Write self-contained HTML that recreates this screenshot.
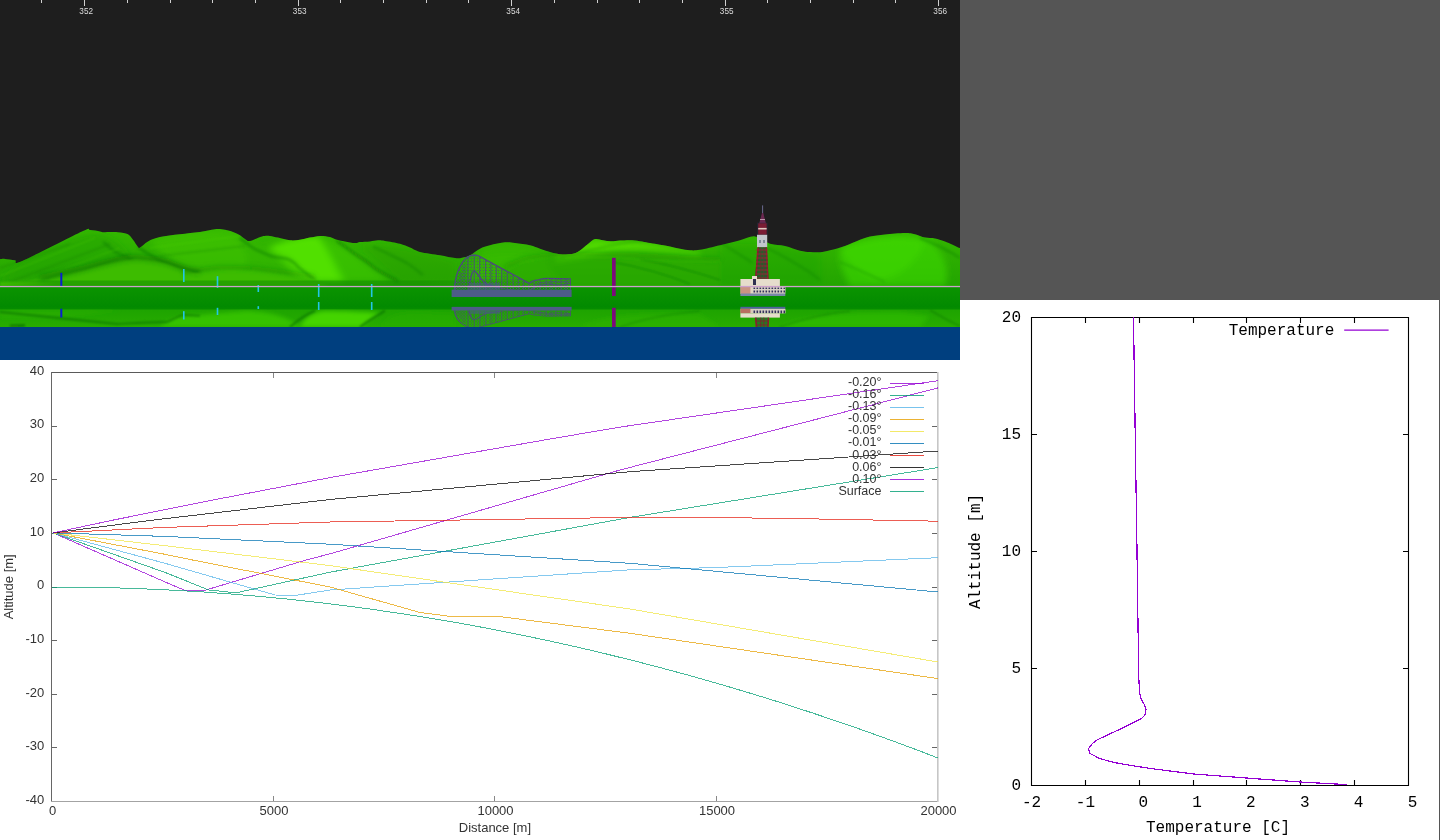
<!DOCTYPE html>
<html><head><meta charset="utf-8"><style>
html,body{margin:0;padding:0;background:#555555;width:1440px;height:840px;overflow:hidden}
svg{display:block}
text{font-family:"Liberation Sans",sans-serif} text.m{font-family:"Liberation Mono",monospace}
</style></head><body>
<svg width="1440" height="840" viewBox="0 0 1440 840">
<rect x="0" y="0" width="1440" height="840" fill="#555555"/>
<defs>
<linearGradient id="gTer" x1="0" y1="0" x2="0" y2="1"><stop offset="0" stop-color="#34b800"/><stop offset="0.5" stop-color="#2cae00"/><stop offset="1" stop-color="#22a400"/></linearGradient>
<linearGradient id="gBand" gradientUnits="userSpaceOnUse" x1="0" y1="286.5" x2="0" y2="327"><stop offset="0" stop-color="#0a9400"/><stop offset="0.2" stop-color="#089000"/><stop offset="0.5" stop-color="#028a00"/><stop offset="0.545" stop-color="#068c00"/><stop offset="0.59" stop-color="#1ea400"/><stop offset="1" stop-color="#28ac00"/></linearGradient>
<filter id="blur3" x="-20%" y="-50%" width="140%" height="200%"><feGaussianBlur stdDeviation="3"/></filter>
<filter id="blur1" x="-20%" y="-50%" width="140%" height="200%"><feGaussianBlur stdDeviation="1"/></filter>
<filter id="blur15" x="-20%" y="-50%" width="140%" height="200%"><feGaussianBlur stdDeviation="1.5"/></filter>
<filter id="blur2" x="-20%" y="-50%" width="140%" height="200%"><feGaussianBlur stdDeviation="2"/></filter>
<pattern id="patDots" x="0" y="0" width="3" height="3" patternUnits="userSpaceOnUse"><rect x="0" y="0" width="1" height="1" fill="#4c4c7a"/><rect x="1.5" y="1.5" width="1" height="1" fill="#4c4c7a" opacity="0.6"/></pattern>
<linearGradient id="gStrip" x1="0" y1="0" x2="1" y2="0"><stop offset="0" stop-color="#148c00" stop-opacity="0"/><stop offset="0.1" stop-color="#148c00" stop-opacity="1"/><stop offset="0.75" stop-color="#148c00"/><stop offset="1" stop-color="#148c00" stop-opacity="0"/></linearGradient>
<pattern id="patWin" x="0" y="0" width="3" height="5" patternUnits="userSpaceOnUse"><rect width="3" height="5" fill="#d8d0c4"/><rect x="0.5" y="0.5" width="1.6" height="3.5" fill="#34345e"/></pattern>
</defs>
<rect x="0" y="0" width="960" height="360" fill="#1e1e1e"/><clipPath id="cpSil"><path d="M0.0,259.2C0.8,259.1 2.5,258.7 5.0,258.9C7.5,259.1 12.1,259.9 15.0,260.3C17.9,260.7 11.0,265.8 22.2,261.0C33.4,256.2 70.7,236.7 82.0,231.5C93.3,226.3 87.0,230.0 90.0,230.0C93.0,230.0 97.7,231.0 100.0,231.4C102.3,231.8 101.0,232.1 104.0,232.2C107.0,232.3 114.0,231.9 118.0,232.2C122.0,232.5 125.5,232.9 128.0,234.2C130.5,235.5 131.3,237.7 133.0,239.8C134.7,241.9 136.8,245.7 138.0,247.0C139.2,248.3 138.3,248.5 140.0,247.6C141.7,246.7 144.7,243.2 148.0,241.4C151.3,239.6 154.7,238.2 160.0,237.0C165.3,235.8 173.3,235.0 180.0,234.2C186.7,233.4 194.2,232.8 200.0,232.0C205.8,231.2 210.8,229.6 215.0,229.2C219.2,228.8 222.0,229.3 225.0,229.8C228.0,230.3 230.5,231.1 233.0,232.0C235.5,232.9 237.8,234.0 240.0,235.3C242.2,236.6 244.3,238.9 246.0,239.8C247.7,240.7 247.3,241.5 250.0,240.9C252.7,240.3 258.7,237.2 262.0,236.4C265.3,235.6 267.3,235.7 270.0,235.9C272.7,236.1 274.7,236.9 278.0,237.6C281.3,238.3 286.3,239.9 290.0,240.3C293.7,240.7 296.7,240.2 300.0,239.8C303.3,239.4 306.7,238.2 310.0,237.6C313.3,236.9 316.7,236.0 320.0,235.9C323.3,235.8 327.2,236.3 330.0,237.0C332.8,237.7 334.5,239.1 337.0,239.8C339.5,240.5 342.0,240.9 345.0,241.4C348.0,241.9 352.5,243.0 355.0,243.1C357.5,243.2 357.5,242.3 360.0,242.0C362.5,241.7 367.0,241.7 370.0,241.4C373.0,241.1 375.5,240.4 378.0,240.3C380.5,240.2 381.3,240.3 385.0,240.9C388.7,241.5 395.8,242.6 400.0,243.7C404.2,244.8 406.7,246.2 410.0,247.6C413.3,249.0 415.0,250.7 420.0,252.0C425.0,253.3 434.2,254.3 440.0,255.3C445.8,256.3 451.3,257.7 455.0,258.1C458.7,258.5 459.5,258.3 462.0,257.8C464.5,257.3 467.0,256.8 470.0,255.3C473.0,253.8 476.7,250.4 480.0,248.7C483.3,247.0 485.8,246.4 490.0,245.3C494.2,244.2 500.8,242.7 505.0,242.3C509.2,241.9 510.8,242.6 515.0,243.1C519.2,243.6 525.8,244.4 530.0,245.3C534.2,246.2 536.7,247.6 540.0,248.7C543.3,249.8 546.7,251.1 550.0,252.0C553.3,252.9 556.3,253.9 560.0,254.2C563.7,254.5 568.7,254.6 572.0,254.0C575.3,253.4 577.3,252.2 580.0,250.5C582.7,248.8 585.5,245.9 588.0,244.0C590.5,242.1 592.5,239.7 595.0,239.1C597.5,238.5 600.3,239.8 603.0,240.2C605.7,240.6 608.2,241.2 611.0,241.3C613.8,241.4 616.5,240.7 620.0,240.5C623.5,240.3 628.3,240.0 632.0,240.2C635.7,240.4 639.0,241.0 642.0,241.5C645.0,242.0 647.0,242.5 650.0,243.1C653.0,243.7 656.7,244.2 660.0,244.8C663.3,245.4 666.7,245.8 670.0,246.4C673.3,247.1 676.7,248.0 680.0,248.7C683.3,249.3 686.7,250.1 690.0,250.3C693.3,250.5 695.0,250.6 700.0,249.8C705.0,249.0 713.3,246.9 720.0,245.3C726.7,243.7 734.2,241.8 740.0,240.3C745.8,238.8 750.0,235.8 755.0,236.4C760.0,237.0 765.0,242.1 770.0,243.7C775.0,245.3 780.0,244.7 785.0,245.9C790.0,247.1 795.8,249.7 800.0,250.7C804.2,251.7 806.7,251.8 810.0,252.0C813.3,252.2 816.7,252.5 820.0,252.2C823.3,251.9 825.8,251.4 830.0,250.3C834.2,249.2 840.0,247.7 845.0,245.9C850.0,244.2 855.8,241.4 860.0,239.8C864.2,238.2 865.8,237.3 870.0,236.4C874.2,235.5 879.2,235.0 885.0,234.4C890.8,233.8 900.0,232.9 905.0,232.9C910.0,232.9 911.7,233.4 915.0,234.2C918.3,235.0 921.7,236.9 925.0,237.6C928.3,238.3 931.7,237.8 935.0,238.4C938.3,239.0 940.8,239.8 945.0,241.4C949.2,243.0 957.5,247.0 960.0,248.1L960,287.5L0,287.5Z"/></clipPath><clipPath id="cpBand"><rect x="0" y="286.5" width="960" height="40.5"/></clipPath><clipPath id="cpRefl"><rect x="0" y="309" width="960" height="18"/></clipPath><path d="M0.0,259.2C0.8,259.1 2.5,258.7 5.0,258.9C7.5,259.1 12.1,259.9 15.0,260.3C17.9,260.7 11.0,265.8 22.2,261.0C33.4,256.2 70.7,236.7 82.0,231.5C93.3,226.3 87.0,230.0 90.0,230.0C93.0,230.0 97.7,231.0 100.0,231.4C102.3,231.8 101.0,232.1 104.0,232.2C107.0,232.3 114.0,231.9 118.0,232.2C122.0,232.5 125.5,232.9 128.0,234.2C130.5,235.5 131.3,237.7 133.0,239.8C134.7,241.9 136.8,245.7 138.0,247.0C139.2,248.3 138.3,248.5 140.0,247.6C141.7,246.7 144.7,243.2 148.0,241.4C151.3,239.6 154.7,238.2 160.0,237.0C165.3,235.8 173.3,235.0 180.0,234.2C186.7,233.4 194.2,232.8 200.0,232.0C205.8,231.2 210.8,229.6 215.0,229.2C219.2,228.8 222.0,229.3 225.0,229.8C228.0,230.3 230.5,231.1 233.0,232.0C235.5,232.9 237.8,234.0 240.0,235.3C242.2,236.6 244.3,238.9 246.0,239.8C247.7,240.7 247.3,241.5 250.0,240.9C252.7,240.3 258.7,237.2 262.0,236.4C265.3,235.6 267.3,235.7 270.0,235.9C272.7,236.1 274.7,236.9 278.0,237.6C281.3,238.3 286.3,239.9 290.0,240.3C293.7,240.7 296.7,240.2 300.0,239.8C303.3,239.4 306.7,238.2 310.0,237.6C313.3,236.9 316.7,236.0 320.0,235.9C323.3,235.8 327.2,236.3 330.0,237.0C332.8,237.7 334.5,239.1 337.0,239.8C339.5,240.5 342.0,240.9 345.0,241.4C348.0,241.9 352.5,243.0 355.0,243.1C357.5,243.2 357.5,242.3 360.0,242.0C362.5,241.7 367.0,241.7 370.0,241.4C373.0,241.1 375.5,240.4 378.0,240.3C380.5,240.2 381.3,240.3 385.0,240.9C388.7,241.5 395.8,242.6 400.0,243.7C404.2,244.8 406.7,246.2 410.0,247.6C413.3,249.0 415.0,250.7 420.0,252.0C425.0,253.3 434.2,254.3 440.0,255.3C445.8,256.3 451.3,257.7 455.0,258.1C458.7,258.5 459.5,258.3 462.0,257.8C464.5,257.3 467.0,256.8 470.0,255.3C473.0,253.8 476.7,250.4 480.0,248.7C483.3,247.0 485.8,246.4 490.0,245.3C494.2,244.2 500.8,242.7 505.0,242.3C509.2,241.9 510.8,242.6 515.0,243.1C519.2,243.6 525.8,244.4 530.0,245.3C534.2,246.2 536.7,247.6 540.0,248.7C543.3,249.8 546.7,251.1 550.0,252.0C553.3,252.9 556.3,253.9 560.0,254.2C563.7,254.5 568.7,254.6 572.0,254.0C575.3,253.4 577.3,252.2 580.0,250.5C582.7,248.8 585.5,245.9 588.0,244.0C590.5,242.1 592.5,239.7 595.0,239.1C597.5,238.5 600.3,239.8 603.0,240.2C605.7,240.6 608.2,241.2 611.0,241.3C613.8,241.4 616.5,240.7 620.0,240.5C623.5,240.3 628.3,240.0 632.0,240.2C635.7,240.4 639.0,241.0 642.0,241.5C645.0,242.0 647.0,242.5 650.0,243.1C653.0,243.7 656.7,244.2 660.0,244.8C663.3,245.4 666.7,245.8 670.0,246.4C673.3,247.1 676.7,248.0 680.0,248.7C683.3,249.3 686.7,250.1 690.0,250.3C693.3,250.5 695.0,250.6 700.0,249.8C705.0,249.0 713.3,246.9 720.0,245.3C726.7,243.7 734.2,241.8 740.0,240.3C745.8,238.8 750.0,235.8 755.0,236.4C760.0,237.0 765.0,242.1 770.0,243.7C775.0,245.3 780.0,244.7 785.0,245.9C790.0,247.1 795.8,249.7 800.0,250.7C804.2,251.7 806.7,251.8 810.0,252.0C813.3,252.2 816.7,252.5 820.0,252.2C823.3,251.9 825.8,251.4 830.0,250.3C834.2,249.2 840.0,247.7 845.0,245.9C850.0,244.2 855.8,241.4 860.0,239.8C864.2,238.2 865.8,237.3 870.0,236.4C874.2,235.5 879.2,235.0 885.0,234.4C890.8,233.8 900.0,232.9 905.0,232.9C910.0,232.9 911.7,233.4 915.0,234.2C918.3,235.0 921.7,236.9 925.0,237.6C928.3,238.3 931.7,237.8 935.0,238.4C938.3,239.0 940.8,239.8 945.0,241.4C949.2,243.0 957.5,247.0 960.0,248.1L960,287.5L0,287.5Z" fill="url(#gTer)"/><g clip-path="url(#cpSil)"><g filter="url(#blur3)"><path d="M20,262 C50,246 80,232 100,234 C115,238 125,248 133,262 L60,282 L0,282Z" fill="#26a200" opacity="0.5"/><path d="M150,240 C180,232 210,228 235,234 C245,246 250,258 245,270 L190,272 C170,262 158,252 150,240Z" fill="#40c400" opacity="0.6"/><path d="M268,248 C285,240 305,235 318,236 C326,246 336,262 346,282 L300,282 C290,270 280,258 268,248Z" fill="#54e600" opacity="0.9"/><path d="M318,236 C335,240 352,252 370,266 L392,282 L340,282 C332,262 324,246 318,236Z" fill="#40cc00" opacity="0.6"/><path d="M246,240 C260,246 275,250 290,258 C300,268 308,276 312,282 L246,282Z" fill="#38bc00" opacity="0.5"/><path d="M360,246 C390,244 420,250 455,262 L455,282 L400,282Z" fill="#249c00" opacity="0.35"/><path d="M470,262 C490,254 520,254 545,260 L560,282 L470,282Z" fill="#3cc400" opacity="0.5"/><path d="M555,257 C570,250 585,242 595,239 C603,240 611,241 620,240.5 C632,240 645,242 700,252 L700,256 C660,250 630,250 612,252 C595,254 575,258 555,262Z" fill="#58e400" opacity="0.8"/><path d="M480,250 C500,240 520,242 550,252 L550,262 L480,262Z" fill="#3cc000" opacity="0.45"/><path d="M840,246 C870,236 905,232 925,240 C920,258 905,275 880,280 C860,275 845,262 840,246Z" fill="#44dc00" opacity="0.5"/><path d="M500,272 C520,262 540,258 560,258 C600,256 650,258 720,262 L720,286 L500,286Z" fill="#2eac00" opacity="0.45"/><path d="M720,246 C760,240 790,248 820,254 L820,286 L720,286Z" fill="#22a000" opacity="0.35"/><path d="M840,250 C860,238 900,232 930,240 C945,255 950,270 945,286 L850,286 C842,272 838,260 840,250Z" fill="#3ed800" opacity="0.6"/></g><g filter="url(#blur15)"><path d="M138,246.7 C142,250 144,251 147,253 C155,258 160,261 167,263 C180,268 190,270 200,273" fill="none" stroke="#0c6e00" stroke-width="2.5" opacity="0.5"/><path d="M103,241.7 C108,246 112,250 117,253 C124,256 128,258 133,260" fill="none" stroke="#0c6e00" stroke-width="2.2" opacity="0.45"/><path d="M240,238 C248,244 252,248 256.7,250 C264,253 268,255 273,256.7 C280,258 286,258 290,260 C294,262 296,264 298,266.7 C304,272 310,276 315,280" fill="none" stroke="#0c6e00" stroke-width="2.2" opacity="0.5"/><path d="M336.7,240.8 C346,247 351,251 356.7,255 C363,259 368,262 373,266.7 C380,272 385,274 390,276.7 C394,279 396,280 398,281.7" fill="none" stroke="#0c6e00" stroke-width="2.5" opacity="0.55"/><path d="M373,246.7 C385,252 397,258 407,263 C413,267 418,271 423,275" fill="none" stroke="#0c6e00" stroke-width="2" opacity="0.4"/><path d="M560,258 C590,250 620,242 650,240" fill="none" stroke="#0c6e00" stroke-width="1.5" opacity="0.35"/><path d="M720,241.7 C732,250 742,256 753,263" fill="none" stroke="#0c6e00" stroke-width="1.8" opacity="0.35"/><path d="M767,248 C780,254 790,260 803,268 C810,272 815,276 820,280" fill="none" stroke="#0c6e00" stroke-width="1.8" opacity="0.35"/><path d="M920,238 C935,244 948,250 960,258" fill="none" stroke="#0c6e00" stroke-width="2" opacity="0.4"/><path d="M840,262 C855,268 870,275 885,282" fill="none" stroke="#0c6e00" stroke-width="1.5" opacity="0.3"/></g><g filter="url(#blur1)" opacity="0.35"><path d="M0,276 L95,238" stroke="#48c800" stroke-width="1.5"/><path d="M10,282 L110,244" stroke="#187e00" stroke-width="1.5"/><path d="M30,282 L120,248" stroke="#48c800" stroke-width="1.5"/><path d="M0,268 L70,244" stroke="#187e00" stroke-width="1.5"/><path d="M50,282 L130,254" stroke="#187e00" stroke-width="1.5"/><path d="M70,282 L140,258" stroke="#48c800" stroke-width="1.5"/><path d="M150,248 L240,236" stroke="#50d000" stroke-width="1.5"/><path d="M160,256 L245,246" stroke="#1a8a00" stroke-width="1.5"/></g><g filter="url(#blur1)"><path d="M0,286 L0,282 C20,281 40,281 50,280 C62,277 72,274 83,271.7 C100,267 118,262 133,260.8 C140,260.5 145,261 150,261.7 C157,262.5 162,263.5 167,265 C173,267 178,269.5 183,271.7 C190,273.5 195,274.5 200,275 L215,286Z" fill="#3cbc00" opacity="1"/><path d="M170,286 L183,276.7 C195,274 205,272 217,270.8 C225,270 232,270 240,270 C255,271 265,273 280,275 C295,277 305,279 315,280 L330,286Z" fill="#3cbc00" opacity="1"/><g filter="url(#blur2)"><path d="M40,278 C62,274 72,271 83,268.7 C100,264 118,259 133,257.8 C145,258 157,259.5 167,262 C178,266.5 190,270.5 200,272" fill="none" stroke="#127600" stroke-width="6" opacity="0.55"/><path d="M183,273.7 C195,271 205,269 217,267.8 C232,267 255,268 280,272 C295,274 305,276 315,277" fill="none" stroke="#1a8800" stroke-width="4" opacity="0.45"/></g><path d="M50,280 C62,277 72,274 83,271.7 C100,267 118,262 133,260.8 C145,261 157,262.5 167,265 C178,269.5 190,273.5 200,275" fill="none" stroke="#4ccc00" stroke-width="1" opacity="0.5"/><path d="M183,276.7 C195,274 205,272 217,270.8 C232,270 255,271 280,275 C295,277 305,279 315,280" fill="none" stroke="#4ccc00" stroke-width="1" opacity="0.45"/><g filter="url(#blur2)"><path d="M505,267 C515,263 522,259 530,257.8 C548,255 580,254.5 613,254.5 C635,255 680,258 720,259" fill="none" stroke="#1a8a00" stroke-width="4" opacity="0.45"/></g><path d="M500,286 L505,270 C515,265 522,261 530,260.8 C548,258 580,257.5 613,257.5 C635,258 680,261 720,262 L720,286Z" fill="#26a600" opacity="0.35"/><path d="M612,262 C635,266 660,272 690,284 M640,259 C665,264 690,270 720,280" fill="none" stroke="#0c7000" stroke-width="2" opacity="0.3"/><path d="M508,270 C515,266 522,262 530,260.8 C540,259 548,258 555,258 C580,257.5 600,257.5 613,257.5 C625,258 635,259 647,260 C680,262 700,261 720,262" fill="none" stroke="#48c800" stroke-width="1" opacity="0.45"/></g></g><rect x="0" y="280.5" width="560" height="6" fill="url(#gStrip)" opacity="0.55"/><rect x="0" y="286.5" width="960" height="40.5" fill="url(#gBand)"/><g clip-path="url(#cpRefl)"><g filter="url(#blur2)"><path d="M160,327 C170,318 185,314 200,315 C215,314 230,312 245,311 C270,311 290,318 300,327Z" fill="#3ccc00" opacity="0.7"/><path d="M300,327 C305,318 312,312 325,311 C345,311 365,312 380,313 C372,318 366,322 362,327Z" fill="#4ede00" opacity="0.8"/><path d="M380,327 C385,318 395,312 420,312 L455,314 L455,327Z" fill="#2aae00" opacity="0.4"/><path d="M580,327 C600,316 640,312 700,314 L720,327Z" fill="#30b800" opacity="0.4"/><path d="M780,327 C800,316 840,312 900,312 L930,316 L920,327Z" fill="#38c800" opacity="0.45"/><path d="M0,310 L120,310 C80,316 40,320 0,318Z" fill="#30b400" opacity="0.4"/></g><g filter="url(#blur1)"><path d="M0,312 C40,316 80,320 117,324 C135,323 150,322 167,322 C172,320 178,316 183,314.8 C190,315 195,315.5 200,315.7" fill="none" stroke="#0a6400" stroke-width="1.8" opacity="0.55"/><path d="M290,327 C297,321 305,315 315,310.7" fill="none" stroke="#0a6400" stroke-width="2" opacity="0.6"/><path d="M385,310.7 C377,316 368,321 360,327" fill="none" stroke="#0a6400" stroke-width="2" opacity="0.6"/><path d="M10,326 L25,325.5" fill="none" stroke="#0a6400" stroke-width="2.5" opacity="0.7"/><path d="M620,327 C640,320 660,315 700,311" fill="none" stroke="#0a6400" stroke-width="1.5" opacity="0.3"/><path d="M780,327 C800,320 820,314 850,311" fill="none" stroke="#0a6400" stroke-width="1.5" opacity="0.3"/><path d="M930,310 C940,316 950,322 960,326" fill="none" stroke="#0a6400" stroke-width="2" opacity="0.35"/></g></g><rect x="0" y="327" width="960" height="33" fill="#003f7f"/><rect x="60.3" y="272.8" width="2" height="13.5" fill="#0a1ed2"/><rect x="60.3" y="308.7" width="2" height="8.8" fill="#0a1ed2"/><rect x="183.0" y="269" width="1.6" height="13.0" fill="#22c6e6"/><rect x="183.0" y="311.2" width="1.6" height="8.3" fill="#22c6e6"/><rect x="216.7" y="276.2" width="1.6" height="11.6" fill="#22c6e6"/><rect x="216.7" y="307.8" width="1.6" height="7.2" fill="#22c6e6"/><rect x="257.5" y="285" width="1.6" height="7.0" fill="#22c6e6"/><rect x="257.5" y="306.2" width="1.6" height="2.8" fill="#22c6e6"/><rect x="317.9" y="284" width="1.6" height="13.0" fill="#22c6e6"/><rect x="317.9" y="302" width="1.6" height="8.0" fill="#22c6e6"/><rect x="370.9" y="284" width="1.6" height="13.0" fill="#22c6e6"/><rect x="370.9" y="302" width="1.6" height="8.0" fill="#22c6e6"/><rect x="612" y="257.8" width="3.7" height="38.2" fill="#7c0a7c"/><rect x="612" y="307.8" width="3.7" height="19.2" fill="#7c0a7c"/><g><path d="M454.3,290 C455,278 458,266 466,258.1 C469,256 472,255 474.2,255 L478.7,255.9 L529.2,283.4 C532,281 535,280 538.3,279.8 C541,279 544,278.4 547.3,278.4 L570.7,278.9 L571,290 Z" fill="url(#patDots)" opacity="0.9"/><path d="M454.3,290 C455,278 458,266 466,258.1 C469,256 472,255 474.2,255 L478.7,255.9 L529.2,283.4 C532,281 535,280 538.3,279.8 C541,279 544,278.4 547.3,278.4 L570.7,278.9" fill="none" stroke="#4c4c7a" stroke-width="1.3"/><path d="M455.5,286.9V290" stroke="#4c4c7a" stroke-width="0.9" opacity="0.85"/><path d="M458,280.4V290" stroke="#4c4c7a" stroke-width="0.9" opacity="0.85"/><path d="M461,272.6V290" stroke="#4c4c7a" stroke-width="0.9" opacity="0.85"/><path d="M464,264.9V290" stroke="#4c4c7a" stroke-width="0.9" opacity="0.85"/><path d="M467.8,256.0V290" stroke="#4c4c7a" stroke-width="0.9" opacity="0.85"/><path d="M474.2,256.0V290" stroke="#4c4c7a" stroke-width="0.9" opacity="0.85"/><path d="M479.6,256.4V290" stroke="#4c4c7a" stroke-width="0.9" opacity="0.85"/><path d="M485.5,259.6V290" stroke="#4c4c7a" stroke-width="0.9" opacity="0.85"/><path d="M490.9,262.5V290" stroke="#4c4c7a" stroke-width="0.9" opacity="0.85"/><path d="M496.4,265.5V290" stroke="#4c4c7a" stroke-width="0.9" opacity="0.85"/><path d="M501.8,268.5V290" stroke="#4c4c7a" stroke-width="0.9" opacity="0.85"/><path d="M507.2,271.4V290" stroke="#4c4c7a" stroke-width="0.9" opacity="0.85"/><path d="M513,274.6V290" stroke="#4c4c7a" stroke-width="0.9" opacity="0.85"/><path d="M518.3,277.5V290" stroke="#4c4c7a" stroke-width="0.9" opacity="0.85"/><path d="M523.6,280.4V290" stroke="#4c4c7a" stroke-width="0.9" opacity="0.85"/><path d="M529,283.3V290" stroke="#4c4c7a" stroke-width="0.9" opacity="0.85"/><path d="M534,282.1V290" stroke="#4c4c7a" stroke-width="0.9" opacity="0.85"/><path d="M540,280.4V290" stroke="#4c4c7a" stroke-width="0.9" opacity="0.85"/><path d="M546,278.8V290" stroke="#4c4c7a" stroke-width="0.9" opacity="0.85"/><path d="M551,278.6V290" stroke="#4c4c7a" stroke-width="0.9" opacity="0.85"/><path d="M556,278.6V290" stroke="#4c4c7a" stroke-width="0.9" opacity="0.85"/><path d="M561,278.6V290" stroke="#4c4c7a" stroke-width="0.9" opacity="0.85"/><path d="M566,278.6V290" stroke="#4c4c7a" stroke-width="0.9" opacity="0.85"/><path d="M570.5,278.6V290" stroke="#4c4c7a" stroke-width="0.9" opacity="0.85"/><path d="M468.8,290 C470,280 472,271 474.2,270.8 C476,271 478,276 486,284.3 L500,288" fill="none" stroke="#4c4c7a" stroke-width="1.4"/><path d="M500,288 C510,290 520,292 530,290 C540,284 548,283 556,285 C562,286 566,284 571,283" fill="none" stroke="#4c4c7a" stroke-width="1.2" opacity="0.9"/><path d="M533,286 C540,282 550,281 560,282 L571,281" fill="none" stroke="#4c4c7a" stroke-width="1" opacity="0.8"/><rect x="470" y="283" width="30" height="7" fill="#4a5a8a" opacity="0.55"/><rect x="451.6" y="289.7" width="120" height="7.3" fill="#4e5c88"/></g><g clip-path="url(#cpBand)"><g transform="translate(0,455.35) scale(1,-0.5)"><path d="M454.3,290 C455,278 458,266 466,258.1 C469,256 472,255 474.2,255 L478.7,255.9 L529.2,283.4 C532,281 535,280 538.3,279.8 C541,279 544,278.4 547.3,278.4 L570.7,278.9 L571,290 Z" fill="url(#patDots)" opacity="0.9"/><path d="M454.3,290 C455,278 458,266 466,258.1 C469,256 472,255 474.2,255 L478.7,255.9 L529.2,283.4 C532,281 535,280 538.3,279.8 C541,279 544,278.4 547.3,278.4 L570.7,278.9" fill="none" stroke="#4c4c7a" stroke-width="1.3"/><path d="M455.5,286.9V290" stroke="#4c4c7a" stroke-width="0.9" opacity="0.85"/><path d="M458,280.4V290" stroke="#4c4c7a" stroke-width="0.9" opacity="0.85"/><path d="M461,272.6V290" stroke="#4c4c7a" stroke-width="0.9" opacity="0.85"/><path d="M464,264.9V290" stroke="#4c4c7a" stroke-width="0.9" opacity="0.85"/><path d="M467.8,256.0V290" stroke="#4c4c7a" stroke-width="0.9" opacity="0.85"/><path d="M474.2,256.0V290" stroke="#4c4c7a" stroke-width="0.9" opacity="0.85"/><path d="M479.6,256.4V290" stroke="#4c4c7a" stroke-width="0.9" opacity="0.85"/><path d="M485.5,259.6V290" stroke="#4c4c7a" stroke-width="0.9" opacity="0.85"/><path d="M490.9,262.5V290" stroke="#4c4c7a" stroke-width="0.9" opacity="0.85"/><path d="M496.4,265.5V290" stroke="#4c4c7a" stroke-width="0.9" opacity="0.85"/><path d="M501.8,268.5V290" stroke="#4c4c7a" stroke-width="0.9" opacity="0.85"/><path d="M507.2,271.4V290" stroke="#4c4c7a" stroke-width="0.9" opacity="0.85"/><path d="M513,274.6V290" stroke="#4c4c7a" stroke-width="0.9" opacity="0.85"/><path d="M518.3,277.5V290" stroke="#4c4c7a" stroke-width="0.9" opacity="0.85"/><path d="M523.6,280.4V290" stroke="#4c4c7a" stroke-width="0.9" opacity="0.85"/><path d="M529,283.3V290" stroke="#4c4c7a" stroke-width="0.9" opacity="0.85"/><path d="M534,282.1V290" stroke="#4c4c7a" stroke-width="0.9" opacity="0.85"/><path d="M540,280.4V290" stroke="#4c4c7a" stroke-width="0.9" opacity="0.85"/><path d="M546,278.8V290" stroke="#4c4c7a" stroke-width="0.9" opacity="0.85"/><path d="M551,278.6V290" stroke="#4c4c7a" stroke-width="0.9" opacity="0.85"/><path d="M556,278.6V290" stroke="#4c4c7a" stroke-width="0.9" opacity="0.85"/><path d="M561,278.6V290" stroke="#4c4c7a" stroke-width="0.9" opacity="0.85"/><path d="M566,278.6V290" stroke="#4c4c7a" stroke-width="0.9" opacity="0.85"/><path d="M570.5,278.6V290" stroke="#4c4c7a" stroke-width="0.9" opacity="0.85"/><path d="M468.8,290 C470,280 472,271 474.2,270.8 C476,271 478,276 486,284.3 L500,288" fill="none" stroke="#4c4c7a" stroke-width="1.4"/><path d="M500,288 C510,290 520,292 530,290 C540,284 548,283 556,285 C562,286 566,284 571,283" fill="none" stroke="#4c4c7a" stroke-width="1.2" opacity="0.9"/><path d="M533,286 C540,282 550,281 560,282 L571,281" fill="none" stroke="#4c4c7a" stroke-width="1" opacity="0.8"/><rect x="470" y="283" width="30" height="7" fill="#4a5a8a" opacity="0.55"/><rect x="451.6" y="289.7" width="120" height="7.3" fill="#4e5c88"/></g></g><path d="M762.6,205.4 V215" stroke="#6a6a90" stroke-width="1"/><path d="M762,213 L763.2,213 L766,223.5 L759.2,223.5 Z" fill="#6a2850"/><path d="M760,219.5H765" stroke="#d0b0c0" stroke-width="0.8"/><rect x="758.2" y="223.2" width="8.5" height="11.6" fill="#7a1c34"/><rect x="758.2" y="227.9" width="8.5" height="1.6" fill="#e0c8c0"/><rect x="757.6" y="223" width="9.6" height="12" fill="none" stroke="#2a3050" stroke-width="0.6" opacity="0.6"/><rect x="757" y="234.8" width="10.2" height="12.4" fill="#c2c6cc"/><rect x="759" y="240" width="2" height="3" fill="#808a98"/><rect x="763" y="240" width="2" height="3" fill="#808a98"/><path d="M757.9,247.2 L754.8,280.5 L768.7,280.5 L766.7,247.2 Z" fill="#2a2a48" opacity="0.6"/><path d="M758.3,247.2 L755.6,280.5 M766.2,247.2 L767.9,280.5" stroke="#8a1c30" stroke-width="1.6"/><path d="M756,250H768" stroke="#9a2a3a" stroke-width="0.9"/><path d="M756,254H768" stroke="#9a2a3a" stroke-width="0.9"/><path d="M756,258H768" stroke="#9a2a3a" stroke-width="0.9"/><path d="M756,262H768" stroke="#9a2a3a" stroke-width="0.9"/><path d="M756,266H768" stroke="#9a2a3a" stroke-width="0.9"/><path d="M756,270H768" stroke="#9a2a3a" stroke-width="0.9"/><path d="M756,274H768" stroke="#9a2a3a" stroke-width="0.9"/><path d="M756,278H768" stroke="#9a2a3a" stroke-width="0.9"/><path d="M760.8,247.2V280.5M763.8,247.2V280.5" stroke="#8a1c30" stroke-width="0.7" opacity="0.8"/><rect x="740.4" y="279" width="39.5" height="7.5" fill="#e6ddcc"/><rect x="752" y="276" width="5" height="5" fill="#e6ddcc"/><rect x="753" y="279" width="3" height="6" fill="#303050"/><rect x="740.4" y="286.5" width="44.9" height="7.5" fill="#e0d6c4"/><rect x="740.4" y="286.5" width="10" height="7.5" fill="#c07868" opacity="0.7"/><rect x="753" y="287.5" width="32.3" height="5" fill="url(#patWin)"/><rect x="740.4" y="293.5" width="44.9" height="2.5" fill="#7888a8"/><rect x="740.4" y="306.8" width="44.9" height="2" fill="#5060a0"/><rect x="740.4" y="308.8" width="44.9" height="4.5" fill="#d8ccbc"/><rect x="740.4" y="308.8" width="10" height="4.5" fill="#b05848" opacity="0.8"/><rect x="753" y="309.3" width="32.3" height="4" fill="url(#patWin)"/><rect x="740.4" y="313.3" width="39.5" height="4.3" fill="#e6ddcc"/><path d="M755.6,317.6 L756.5,327 L768,327 L768.7,317.6 Z" fill="#2a3a4a" opacity="0.45"/><path d="M755.6,317.6 L756.5,327 M768.5,317.6 L767.9,327" stroke="#8a1c30" stroke-width="1.6"/><path d="M756,321H768M756,325H768M760.8,317.6V327M763.8,317.6V327" stroke="#8a1c30" stroke-width="0.8"/><rect x="0" y="285.9" width="960" height="1.3" fill="#cca2cc"/>
<rect x="41" y="0" width="1" height="3" fill="#d0d0d0"/><rect x="84" y="0" width="1" height="6" fill="#d0d0d0"/><rect x="127" y="0" width="1" height="3" fill="#d0d0d0"/><rect x="170" y="0" width="1" height="3" fill="#d0d0d0"/><rect x="212" y="0" width="1" height="3" fill="#d0d0d0"/><rect x="255" y="0" width="1" height="3" fill="#d0d0d0"/><rect x="298" y="0" width="1" height="6" fill="#d0d0d0"/><rect x="340" y="0" width="1" height="3" fill="#d0d0d0"/><rect x="383" y="0" width="1" height="3" fill="#d0d0d0"/><rect x="426" y="0" width="1" height="3" fill="#d0d0d0"/><rect x="468" y="0" width="1" height="3" fill="#d0d0d0"/><rect x="511" y="0" width="1" height="6" fill="#d0d0d0"/><rect x="554" y="0" width="1" height="3" fill="#d0d0d0"/><rect x="597" y="0" width="1" height="3" fill="#d0d0d0"/><rect x="639" y="0" width="1" height="3" fill="#d0d0d0"/><rect x="682" y="0" width="1" height="3" fill="#d0d0d0"/><rect x="725" y="0" width="1" height="6" fill="#d0d0d0"/><rect x="767" y="0" width="1" height="3" fill="#d0d0d0"/><rect x="810" y="0" width="1" height="3" fill="#d0d0d0"/><rect x="853" y="0" width="1" height="3" fill="#d0d0d0"/><rect x="895" y="0" width="1" height="3" fill="#d0d0d0"/><rect x="938" y="0" width="1" height="6" fill="#d0d0d0"/><text x="86.2" y="14.1" font-size="8.2" fill="#dcdcdc" text-anchor="middle" font-family="Liberation Sans">352</text><text x="299.7" y="14.1" font-size="8.2" fill="#dcdcdc" text-anchor="middle" font-family="Liberation Sans">353</text><text x="513.2" y="14.1" font-size="8.2" fill="#dcdcdc" text-anchor="middle" font-family="Liberation Sans">354</text><text x="726.7" y="14.1" font-size="8.2" fill="#dcdcdc" text-anchor="middle" font-family="Liberation Sans">355</text><text x="940.2" y="14.1" font-size="8.2" fill="#dcdcdc" text-anchor="middle" font-family="Liberation Sans">356</text>
<rect x="0" y="360" width="960" height="480" fill="#ffffff"/><rect x="51" y="372" width="887" height="1" fill="#5a5a5a"/><rect x="51" y="372" width="1" height="430" fill="#666"/><rect x="51" y="801" width="887" height="1" fill="#a3a3a3"/><rect x="937" y="372" width="1.6" height="430" fill="#c6c6c6"/><path d="M52,747.5h5M937,747.5h-5" stroke="#666" stroke-width="1"/><path d="M52,694.5h5M937,694.5h-5" stroke="#666" stroke-width="1"/><path d="M52,640.5h5M937,640.5h-5" stroke="#666" stroke-width="1"/><path d="M52,587.5h5M937,587.5h-5" stroke="#666" stroke-width="1"/><path d="M52,533.5h5M937,533.5h-5" stroke="#666" stroke-width="1"/><path d="M52,479.5h5M937,479.5h-5" stroke="#666" stroke-width="1"/><path d="M52,426.5h5M937,426.5h-5" stroke="#666" stroke-width="1"/><path d="M273.5,373v5M273.5,801v-5" stroke="#888" stroke-width="1"/><path d="M494.5,373v5M494.5,801v-5" stroke="#888" stroke-width="1"/><path d="M716.5,373v5M716.5,801v-5" stroke="#888" stroke-width="1"/><text x="44.3" y="803.8" text-anchor="end" font-size="13" fill="#333">-40</text><text x="44.3" y="750.2" text-anchor="end" font-size="13" fill="#333">-30</text><text x="44.3" y="696.5" text-anchor="end" font-size="13" fill="#333">-20</text><text x="44.3" y="642.9" text-anchor="end" font-size="13" fill="#333">-10</text><text x="44.3" y="589.3" text-anchor="end" font-size="13" fill="#333">0</text><text x="44.3" y="535.7" text-anchor="end" font-size="13" fill="#333">10</text><text x="44.3" y="482.1" text-anchor="end" font-size="13" fill="#333">20</text><text x="44.3" y="428.4" text-anchor="end" font-size="13" fill="#333">30</text><text x="44.3" y="374.8" text-anchor="end" font-size="13" fill="#333">40</text><text x="52.5" y="815.4" text-anchor="middle" font-size="13" fill="#333">0</text><text x="274.0" y="815.4" text-anchor="middle" font-size="13" fill="#333">5000</text><text x="495.5" y="815.4" text-anchor="middle" font-size="13" fill="#333">10000</text><text x="717.0" y="815.4" text-anchor="middle" font-size="13" fill="#333">15000</text><text x="938.5" y="815.4" text-anchor="middle" font-size="13" fill="#333">20000</text><text x="494.9" y="832.1" text-anchor="middle" font-size="13" fill="#333">Distance [m]</text><text transform="translate(13.3,586.8) rotate(-90)" text-anchor="middle" font-size="13" fill="#333">Altitude [m]</text><polyline points="53.1,532.9 165.0,581.9 184.4,590.2 203.8,590.6 306.0,560.0 330.0,553.8 620.0,470.0 937.9,387.9" fill="none" stroke="#9400d3" stroke-width="1" shape-rendering="crispEdges" stroke-opacity="0.72"/><polyline points="53.1,532.9 165.0,572.4 208.8,590.0 236.2,592.8 330.0,572.2 630.0,517.4 937.9,467.6" fill="none" stroke="#009e73" stroke-width="1" shape-rendering="crispEdges" stroke-opacity="0.72"/><polyline points="53.1,532.9 165.0,563.3 275.0,595.0 295.0,595.5 330.0,590.0 630.0,569.8 715.0,567.6 937.9,557.7" fill="none" stroke="#56b4e9" stroke-width="1" shape-rendering="crispEdges" stroke-opacity="0.72"/><polyline points="53.1,532.9 165.0,554.3 192.5,560.0 330.0,587.0 420.5,612.6 449.0,616.2 496.7,616.2 630.0,633.3 937.9,678.6" fill="none" stroke="#e69f00" stroke-width="1" shape-rendering="crispEdges" stroke-opacity="0.72"/><polyline points="53.1,532.9 165.0,545.7 283.8,560.0 330.0,565.6 630.0,609.0 937.9,662.0" fill="none" stroke="#f0e442" stroke-width="1" shape-rendering="crispEdges" stroke-opacity="0.72"/><polyline points="53.1,532.9 165.0,536.4 330.0,544.2 630.0,563.3 937.9,592.0" fill="none" stroke="#0072b2" stroke-width="1" shape-rendering="crispEdges" stroke-opacity="0.72"/><polyline points="53.1,532.9 165.0,527.4 330.0,522.0 630.0,517.4 770.0,518.1 937.9,521.2" fill="none" stroke="#e51e10" stroke-width="1" shape-rendering="crispEdges" stroke-opacity="0.72"/><polyline points="53.1,532.9 153.6,520.0 330.0,499.5 630.0,471.7 937.9,451.0" fill="none" stroke="#000000" stroke-width="1" shape-rendering="crispEdges" stroke-opacity="0.72"/><polyline points="53.1,532.9 113.6,520.0 213.0,500.0 330.0,477.6 544.3,440.0 620.0,427.1 937.9,380.7" fill="none" stroke="#9400d3" stroke-width="1" shape-rendering="crispEdges" stroke-opacity="0.72"/><polyline points="51.5,587.0 60.4,587.0 69.2,587.1 78.1,587.2 86.9,587.3 95.8,587.4 104.7,587.6 113.5,587.8 122.4,588.1 131.2,588.4 140.1,588.7 149.0,589.1 157.8,589.5 166.7,589.9 175.5,590.3 184.4,590.8 193.3,591.4 202.1,591.9 211.0,592.5 219.8,593.2 228.7,593.8 237.6,594.5 246.4,595.3 255.3,596.0 264.1,596.8 273.0,597.7 281.9,598.5 290.7,599.4 299.6,600.4 308.4,601.4 317.3,602.4 326.2,603.4 335.0,604.5 343.9,605.6 352.7,606.7 361.6,607.9 370.5,609.1 379.3,610.4 388.2,611.7 397.0,613.0 405.9,614.3 414.8,615.7 423.6,617.1 432.5,618.6 441.3,620.1 450.2,621.6 459.1,623.1 467.9,624.7 476.8,626.3 485.6,628.0 494.5,629.7 503.4,631.4 512.2,633.2 521.1,635.0 529.9,636.8 538.8,638.7 547.7,640.6 556.5,642.5 565.4,644.5 574.2,646.4 583.1,648.5 592.0,650.5 600.8,652.6 609.7,654.8 618.5,657.0 627.4,659.2 636.3,661.4 645.1,663.7 654.0,666.0 662.8,668.3 671.7,670.7 680.6,673.1 689.4,675.5 698.3,678.0 707.1,680.5 716.0,683.1 724.9,685.6 733.7,688.3 742.6,690.9 751.4,693.6 760.3,696.3 769.2,699.0 778.0,701.8 786.9,704.7 795.7,707.5 804.6,710.4 813.5,713.3 822.3,716.3 831.2,719.3 840.0,722.3 848.9,725.3 857.8,728.4 866.6,731.5 875.5,734.7 884.3,737.9 893.2,741.1 902.1,744.4 910.9,747.7 919.8,751.0 928.6,754.4 937.5,757.8" fill="none" stroke="#009e73" stroke-width="1" shape-rendering="crispEdges" stroke-opacity="0.72"/><text x="881.5" y="386.3" text-anchor="end" font-size="12.5" fill="#333">-0.20°</text><path d="M890,383.5H924" stroke="#9400d3" stroke-width="1" stroke-opacity="0.8"/><text x="881.5" y="398.3" text-anchor="end" font-size="12.5" fill="#333">-0.16°</text><path d="M890,395.5H924" stroke="#009e73" stroke-width="1" stroke-opacity="0.8"/><text x="881.5" y="410.4" text-anchor="end" font-size="12.5" fill="#333">-0.13°</text><path d="M890,407.5H924" stroke="#56b4e9" stroke-width="1" stroke-opacity="0.8"/><text x="881.5" y="422.4" text-anchor="end" font-size="12.5" fill="#333">-0.09°</text><path d="M890,419.5H924" stroke="#e69f00" stroke-width="1" stroke-opacity="0.8"/><text x="881.5" y="434.4" text-anchor="end" font-size="12.5" fill="#333">-0.05°</text><path d="M890,431.5H924" stroke="#f0e442" stroke-width="1" stroke-opacity="0.8"/><text x="881.5" y="446.4" text-anchor="end" font-size="12.5" fill="#333">-0.01°</text><path d="M890,443.5H924" stroke="#0072b2" stroke-width="1" stroke-opacity="0.8"/><text x="881.5" y="458.5" text-anchor="end" font-size="12.5" fill="#333">0.03°</text><path d="M890,455.5H924" stroke="#e51e10" stroke-width="1" stroke-opacity="0.8"/><text x="881.5" y="470.5" text-anchor="end" font-size="12.5" fill="#333">0.06°</text><path d="M890,467.5H924" stroke="#000000" stroke-width="1" stroke-opacity="0.8"/><text x="881.5" y="482.5" text-anchor="end" font-size="12.5" fill="#333">0.10°</text><path d="M890,479.5H924" stroke="#9400d3" stroke-width="1" stroke-opacity="0.8"/><text x="881.5" y="494.6" text-anchor="end" font-size="12.5" fill="#333">Surface</text><path d="M890,491.5H924" stroke="#009e73" stroke-width="1" stroke-opacity="0.8"/>
<rect x="960" y="300" width="479" height="540" fill="#ffffff"/><path d="M1031.5,317.5H1408.5V785.5H1031.5Z" fill="none" stroke="#000" stroke-width="1.1"/><path d="M1085.5,317.5v5.5M1085.5,785.5v-5.5" stroke="#000" stroke-width="1.1"/><path d="M1139.5,317.5v5.5M1139.5,785.5v-5.5" stroke="#000" stroke-width="1.1"/><path d="M1193.5,317.5v5.5M1193.5,785.5v-5.5" stroke="#000" stroke-width="1.1"/><path d="M1246.5,317.5v5.5M1246.5,785.5v-5.5" stroke="#000" stroke-width="1.1"/><path d="M1300.5,317.5v5.5M1300.5,785.5v-5.5" stroke="#000" stroke-width="1.1"/><path d="M1354.5,317.5v5.5M1354.5,785.5v-5.5" stroke="#000" stroke-width="1.1"/><path d="M1031.5,668.5h5.5M1408.5,668.5h-5.5" stroke="#000" stroke-width="1.1"/><path d="M1031.5,551.5h5.5M1408.5,551.5h-5.5" stroke="#000" stroke-width="1.1"/><path d="M1031.5,434.5h5.5M1408.5,434.5h-5.5" stroke="#000" stroke-width="1.1"/><text x="1021" y="790.0" text-anchor="end" font-size="16" fill="#000" class="m">0</text><text x="1021" y="673.0" text-anchor="end" font-size="16" fill="#000" class="m">5</text><text x="1021" y="556.0" text-anchor="end" font-size="16" fill="#000" class="m">10</text><text x="1021" y="439.0" text-anchor="end" font-size="16" fill="#000" class="m">15</text><text x="1021" y="322.0" text-anchor="end" font-size="16" fill="#000" class="m">20</text><text x="1031.5" y="807.2" text-anchor="middle" font-size="16" fill="#000" class="m">-2</text><text x="1085.4" y="807.2" text-anchor="middle" font-size="16" fill="#000" class="m">-1</text><text x="1143.2" y="807.2" text-anchor="middle" font-size="16" fill="#000" class="m">0</text><text x="1197.1" y="807.2" text-anchor="middle" font-size="16" fill="#000" class="m">1</text><text x="1250.9" y="807.2" text-anchor="middle" font-size="16" fill="#000" class="m">2</text><text x="1304.8" y="807.2" text-anchor="middle" font-size="16" fill="#000" class="m">3</text><text x="1358.6" y="807.2" text-anchor="middle" font-size="16" fill="#000" class="m">4</text><text x="1412.5" y="807.2" text-anchor="middle" font-size="16" fill="#000" class="m">5</text><text x="1218" y="832" text-anchor="middle" font-size="16" fill="#000" class="m">Temperature [C]</text><text transform="translate(979.5,551.5) rotate(-90)" text-anchor="middle" font-size="16" fill="#000" class="m">Altitude [m]</text><text x="1334.3" y="334.8" text-anchor="end" font-size="16" fill="#000" class="m">Temperature</text><path d="M1344.2,330.1H1388.6" stroke="#9400d3" stroke-width="1.2"/><polyline points="1133.5,317.5 1135.3,440.0 1136.9,543.7 1137.8,609.7 1138.7,675.3 1139.6,693.1 1140.9,698.3 1144.1,704.2 1146.1,709.5 1144.8,715.3 1141.5,718.6 1132.4,723.2 1119.3,729.5 1106.2,735.6 1097.7,739.6 1092.4,743.5 1088.5,748.7 1089.8,753.3 1099.6,758.5 1114.0,762.5 1132.4,765.7 1150.0,768.4 1160.0,769.7 1193.7,774.0 1246.2,778.0 1300.1,782.0 1346.8,784.6" fill="none" stroke="#9400d3" stroke-width="1.2" shape-rendering="crispEdges"/>
</svg></body></html>
